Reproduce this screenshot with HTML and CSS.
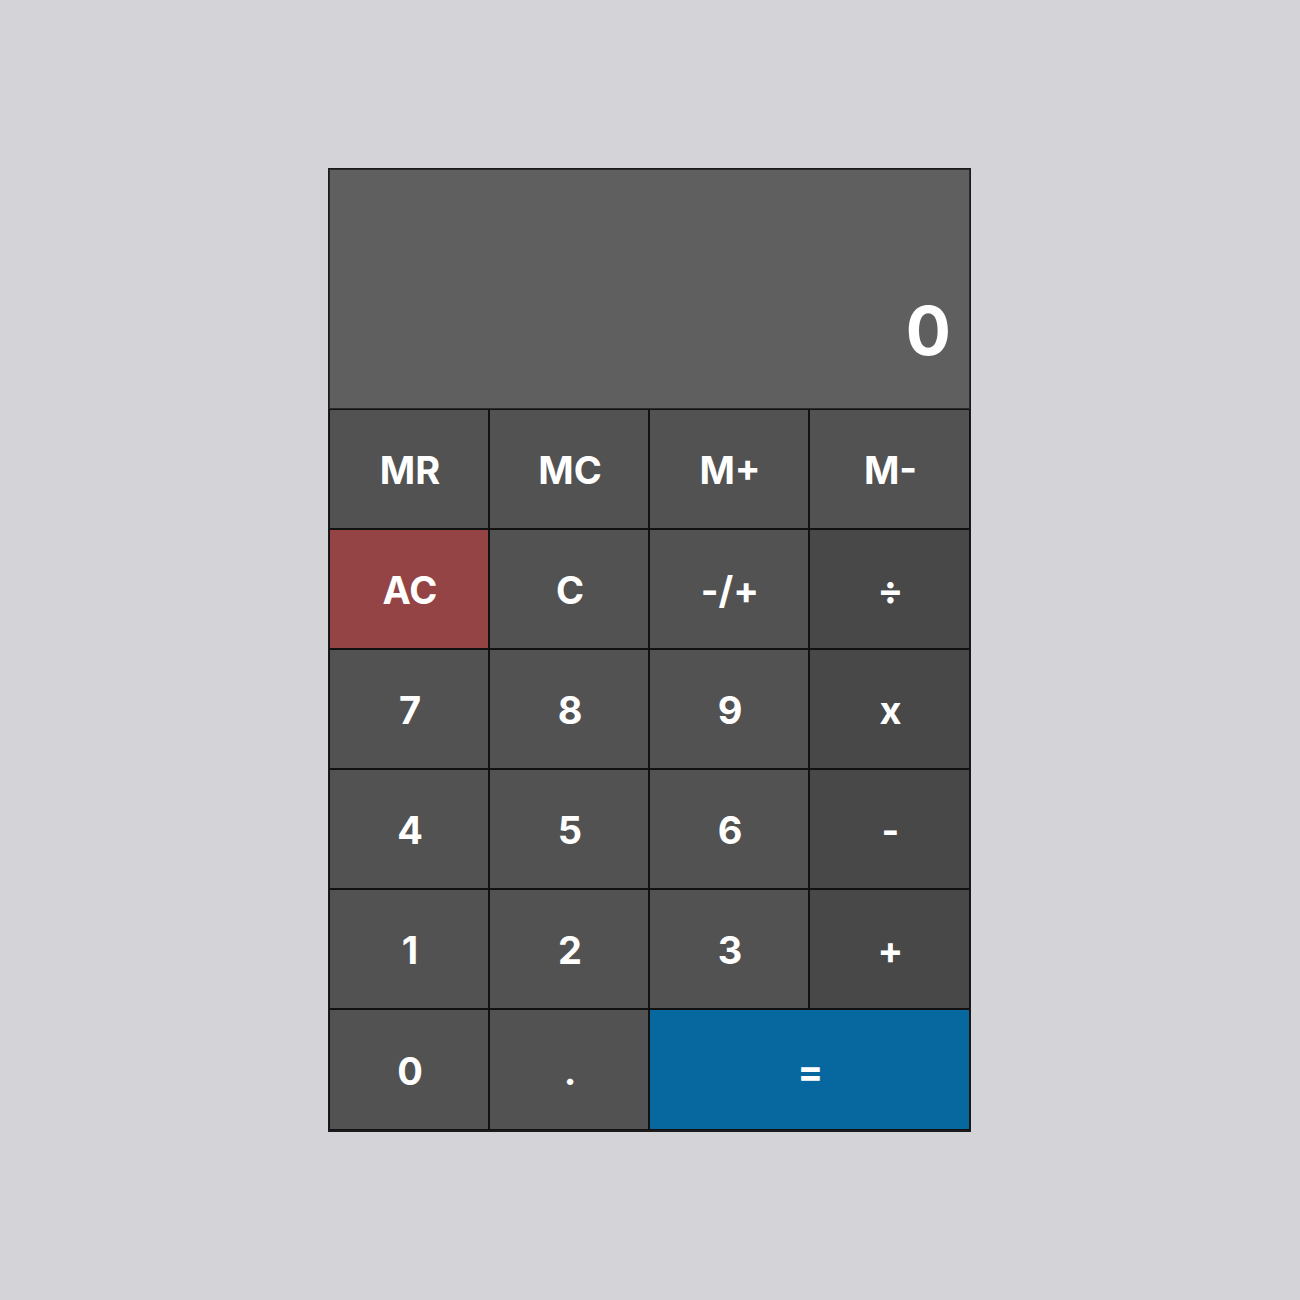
FILE: index.html
```html
<!DOCTYPE html>
<html lang="en">
<head>
<meta charset="utf-8">
<title>Calculator</title>
<link rel="stylesheet" href="styles.css">
</head>
<body>
<div class="calc">
  <div class="display"><span class="value">0</span></div>
  <div class="keys">
    <button class="key">MR</button>
    <button class="key">MC</button>
    <button class="key">M+</button>
    <button class="key">M-</button>
    <button class="key key-clear">AC</button>
    <button class="key">C</button>
    <button class="key">-/+</button>
    <button class="key key-op">÷</button>
    <button class="key">7</button>
    <button class="key">8</button>
    <button class="key">9</button>
    <button class="key key-op">x</button>
    <button class="key">4</button>
    <button class="key">5</button>
    <button class="key">6</button>
    <button class="key key-op">-</button>
    <button class="key">1</button>
    <button class="key">2</button>
    <button class="key">3</button>
    <button class="key key-op">+</button>
    <button class="key">0</button>
    <button class="key">.</button>
    <button class="key key-equals">=</button>
  </div>
</div>
</body>
</html>
```

FILE: styles.css
```css
html, body {
  margin: 0;
  padding: 0;
}
body {
  background: #d4d3d8;
  min-height: 1300px;
  padding-top: 168px;
  box-sizing: border-box;
  font-family: Inter, "Liberation Sans", sans-serif;
}
.calc {
  width: 643px;
  box-sizing: border-box;
  margin: 0 0 0 calc(50% - 322px);
  border: 1px solid #1b1b1b;
  border-bottom-width: 2px;
  background: #1b1b1b;
  display: flex;
  flex-direction: column;
}
.display {
  height: 240px;
  box-sizing: border-box;
  border: 1px solid #2a2a2a;
  background: #5f5f5f;
  display: flex;
  align-items: flex-end;
  justify-content: flex-end;
  padding: 0 18px 44px 0;
}
.value {
  color: #fff;
  font-weight: 700;
  font-size: 67px;
  line-height: 1;
}
.keys {
  display: grid;
  grid-template-columns: 160px 160px 160px 161px;
  grid-template-rows: repeat(5, 120px) 121px;
}
.key {
  box-sizing: border-box;
  margin: 0;
  border: 1px solid #111;
  background: #525252;
  color: #fff;
  font-family: Inter, "Liberation Sans", sans-serif;
  font-weight: 700;
  font-size: 38px;
  padding: 2px 0 0 2px;
  display: flex;
  align-items: center;
  justify-content: center;
}
.key-op {
  background: #484848;
}
.key-clear {
  background: #944444;
}
.key-equals {
  grid-column: span 2;
  background: #07689f;
}
```
